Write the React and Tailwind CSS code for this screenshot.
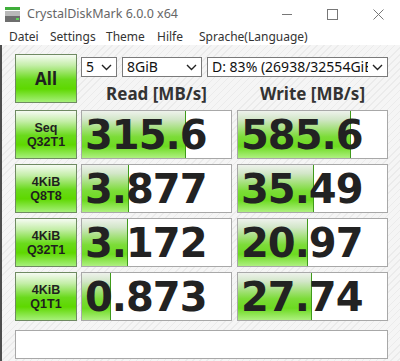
const ui = { fontFamily: '"Noto Sans", "Liberation Sans", sans-serif' }
const big = { fontFamily: '"DejaVu Sans", "Verdana", sans-serif' }
const label = { fontFamily: '"Liberation Sans", "Noto Sans", sans-serif' }

const rows = [
  { l1: 'Seq', l2: 'Q32T1', read: '315.6', rw: 104, write: '585.6', ww: 113 },
  { l1: '4KiB', l2: 'Q8T8', read: '3.877', rw: 47, write: '35.49', ww: 76 },
  { l1: '4KiB', l2: 'Q32T1', read: '3.172', rw: 46, write: '20.97', ww: 70 },
  { l1: '4KiB', l2: 'Q1T1', read: '0.873', rw: 29, write: '27.74', ww: 74 },
]

function Chevron() {
  return (
    <svg width="11" height="7" viewBox="0 0 11 7" className="shrink-0">
      <path d="M1 1 L5.5 5.5 L10 1" fill="none" stroke="#222" strokeWidth="1.4" />
    </svg>
  )
}

function Select({ w, children }) {
  return (
    <div
      className={`${w} h-[20px] bg-white border border-[#7a7a7a] flex items-center pl-[4px] pr-[4px] gap-1 overflow-hidden`}
    >
      <span className="flex-1 min-w-0 whitespace-nowrap overflow-hidden text-[14px] leading-[18px] text-[#111]">
        {children}
      </span>
      <Chevron />
    </div>
  )
}

function GreenButton({ children, className = '', style }) {
  return (
    <div
      className={`w-[62px] h-[49px] border border-[#6f8a62] bg-[linear-gradient(to_bottom,#f6fbf3_0%,#c4eea8_22%,#6ada1c_52%,#5ed800_72%,#a6f07a_100%)] flex flex-col items-center justify-center text-[#1f1f1f] font-bold ${className}`}
      style={style}
    >
      {children}
    </div>
  )
}

function Result({ value, width }) {
  return (
    <div className="relative w-[151px] h-[49px] bg-white border border-[#a8a8a8] overflow-hidden">
      <div
        className="absolute left-0 top-0 bottom-0 border-r border-[#3f9a1a] bg-[linear-gradient(to_bottom,#eef2ec_0%,#d2e6c8_18%,#7cdc38_55%,#6cda20_75%,#aef080_100%)]"
        style={{ width }}
      />
      <div
        className="relative h-full flex items-center pl-[3px] text-[40px] font-bold tracking-[-1px] text-[#222] leading-none"
        style={big}
      >
        {value}
      </div>
    </div>
  )
}

export default function App() {
  return (
    <div className="w-[400px] h-[361px] bg-white overflow-hidden flex flex-col" style={ui}>
      {/* Title bar */}
      <div className="h-[28px] flex items-center shrink-0">
        <svg width="16" height="16" viewBox="0 0 16 16" className="ml-[5px] mt-[1px]">
          <rect x="0" y="0" width="15" height="3" fill="#3fae3a" />
          <rect x="0" y="4" width="15" height="11" fill="#b9b9b9" />
          <rect x="0" y="9" width="15" height="6" fill="#6e6e6e" />
          <rect x="11" y="11" width="3" height="2" fill="#5fd35a" />
        </svg>
        <span className="ml-[6px] text-[12.5px] text-[#666] leading-none">CrystalDiskMark 6.0.0 x64</span>
        <div className="ml-auto flex items-center h-full">
          <svg width="11" height="11" viewBox="0 0 11 11" className="mr-[34px]">
            <path d="M0 5.5 H10" stroke="#777" strokeWidth="1" />
          </svg>
          <svg width="11" height="11" viewBox="0 0 11 11" className="mr-[35px]">
            <rect x="0.5" y="0.5" width="10" height="10" fill="none" stroke="#777" strokeWidth="1" />
          </svg>
          <svg width="11" height="11" viewBox="0 0 11 11" className="mr-[16px]">
            <path d="M0.5 0.5 L10.5 10.5 M10.5 0.5 L0.5 10.5" stroke="#777" strokeWidth="1" />
          </svg>
        </div>
      </div>

      {/* Menu bar */}
      <div className="h-[17px] flex items-center pl-[9px] text-[12px] text-[#333] leading-none shrink-0">
        <span className="w-[41px]">Datei</span>
        <span className="w-[56px]">Settings</span>
        <span className="w-[51px]">Theme</span>
        <span className="w-[42px]">Hilfe</span>
        <span>Sprache(Language)</span>
      </div>

      {/* Content */}
      <div className="flex-1 flex bg-[image:repeating-linear-gradient(135deg,#f5f5f5_0px,#f5f5f5_4px,#ebebeb_4px,#ebebeb_5px)]">
        <div className="w-[2px] bg-[#4e4e4e] shrink-0" />
        <div className="flex-1 pl-[13px] pt-[9px] flex flex-col gap-[5px]">
          <div className="flex">
            <GreenButton className="text-[17px]">All</GreenButton>
            <div className="ml-[4px] flex flex-col">
              <div className="mt-[3px] flex gap-[5px]">
                <Select w="w-[36px]">5</Select>
                <Select w="w-[80px]">8GiB</Select>
                <Select w="w-[181px]">D: 83% (26938/32554GiB)</Select>
              </div>
              <div className="flex mt-[6px] text-[17px] font-bold text-[#333] leading-[22px]">
                <div className="w-[151px] text-center">Read [MB/s]</div>
                <div className="w-[151px] ml-[5px] text-center">Write [MB/s]</div>
              </div>
            </div>
          </div>

          {rows.map((r, i) => (
            <div key={i} className="flex">
              <GreenButton className="text-[12.5px] leading-[14px]" style={label}>
                <span>{r.l1}</span>
                <span>{r.l2}</span>
              </GreenButton>
              <div className="ml-[4px]">
                <Result value={r.read} width={r.rw} />
              </div>
              <div className="ml-[5px]">
                <Result value={r.write} width={r.ww} />
              </div>
            </div>
          ))}

          <div className="mt-[4px] w-[373px] h-[29px] bg-white border border-[#a8a8a8]" />
        </div>
      </div>
    </div>
  )
}
